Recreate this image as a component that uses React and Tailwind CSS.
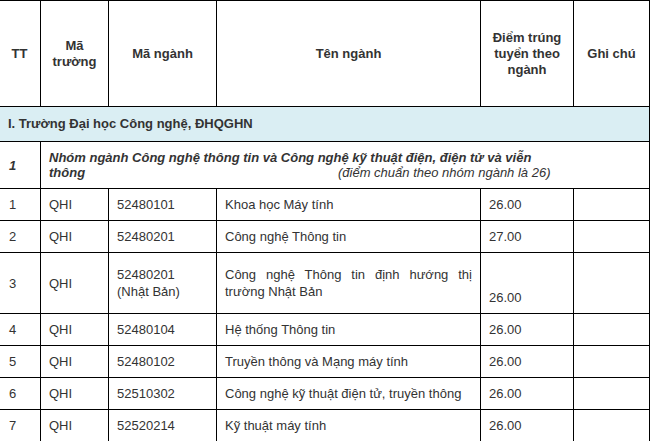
const rows = [
  { tt: "1", ma: "QHI", nganh: "52480101", ten: "Khoa học Máy tính", diem: "26.00" },
  { tt: "2", ma: "QHI", nganh: "52480201", ten: "Công nghệ Thông tin", diem: "27.00" },
  { tt: "3", ma: "QHI", nganh: "52480201", nganh2: "(Nhật Bản)", ten: "Công nghệ Thông tin định hướng thị trường Nhật Bản", diem: "26.00", tall: true },
  { tt: "4", ma: "QHI", nganh: "52480104", ten: "Hệ thống Thông tin", diem: "26.00" },
  { tt: "5", ma: "QHI", nganh: "52480102", ten: "Truyền thông và Mạng máy tính", diem: "26.00" },
  { tt: "6", ma: "QHI", nganh: "52510302", ten: "Công nghệ kỹ thuật điện tử, truyền thông", diem: "26.00" },
  { tt: "7", ma: "QHI", nganh: "52520214", ten: "Kỹ thuật máy tính", diem: "26.00" },
]

const cell = "border border-black px-[8px] align-middle"

export default function App() {
  return (
    <div className="w-[651px] h-[441px] overflow-hidden bg-white font-['Liberation_Sans',Arial,sans-serif] text-[13px] text-[#333]">
      <table className="-ml-[2px] table-fixed border-collapse w-[651px]">
        <colgroup>
          <col className="w-[42px]" />
          <col className="w-[68px]" />
          <col className="w-[108px]" />
          <col className="w-[264px]" />
          <col className="w-[93px]" />
          <col className="w-[76px]" />
        </colgroup>
        <thead>
          <tr className="h-[106px] font-bold text-center leading-[16px]">
            <th className={cell}>TT</th>
            <th className={cell}>Mã<br />trường</th>
            <th className={cell}>Mã ngành</th>
            <th className={cell}>Tên ngành</th>
            <th className={cell}>Điểm trúng<br />tuyển theo<br />ngành</th>
            <th className={cell}>Ghi chú</th>
          </tr>
        </thead>
        <tbody>
          <tr className="h-[35px] bg-[#daeef3] font-bold">
            <td colSpan={6} className="border border-black pl-[9px] pr-[8px] align-middle">
              I. Trường Đại học Công nghệ, ĐHQGHN
            </td>
          </tr>
          <tr className="h-[47px] italic leading-[15px]">
            <td className={cell + " font-bold pl-[10px]"}>1</td>
            <td colSpan={5} className={cell}>
              <div className="font-bold">Nhóm ngành Công nghệ thông tin và Công nghệ kỹ thuật điện, điện tử và viễn</div>
              <div className="flex">
                <span className="font-bold w-[289px]">thông</span>
                <span>(điểm chuẩn theo nhóm ngành là 26)</span>
              </div>
            </td>
          </tr>
          {rows.map((r) => (
            <tr key={r.tt} className={(r.tall ? "h-[61px]" : "h-[32px]") + " leading-[17px]"}>
              <td className={cell + " pl-[10px]"}>{r.tt}</td>
              <td className={cell}>{r.ma}</td>
              <td className={cell}>
                {r.nganh}
                {r.nganh2 && <><br />{r.nganh2}</>}
              </td>
              <td className={cell + (r.tall ? " text-justify" : "")}>{r.ten}</td>
              <td className={r.tall ? "border border-black px-[8px] align-bottom pb-[7px]" : cell}>{r.diem}</td>
              <td className={cell}></td>
            </tr>
          ))}
        </tbody>
      </table>
    </div>
  )
}
